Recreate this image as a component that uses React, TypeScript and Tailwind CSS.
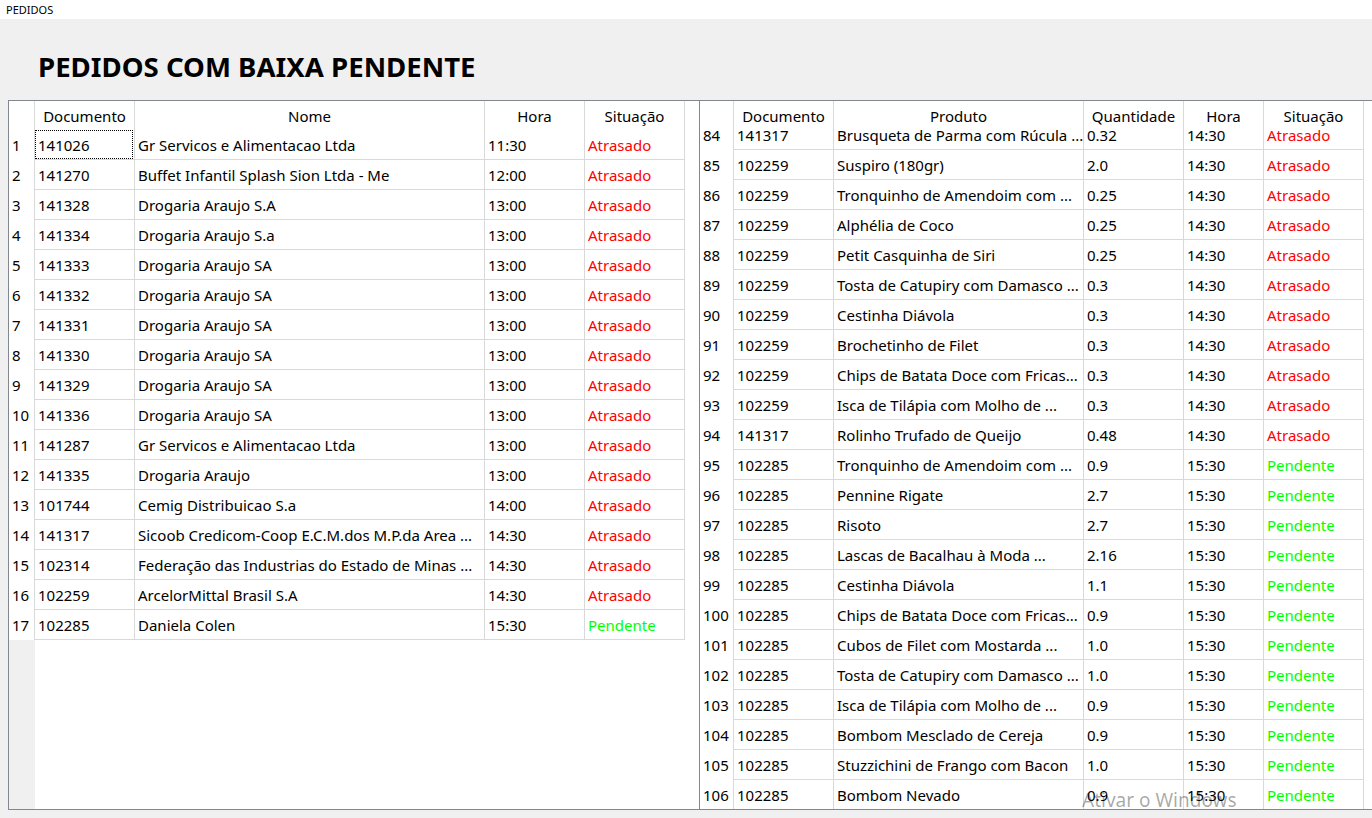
import React from "react";

type LRow = [number, string, string, string, string];
type RRow = [number, string, string, string, string, string];

const leftRows: LRow[] = [
  [1, "141026", "Gr Servicos e Alimentacao Ltda", "11:30", "Atrasado"],
  [2, "141270", "Buffet Infantil Splash Sion Ltda - Me", "12:00", "Atrasado"],
  [3, "141328", "Drogaria Araujo S.A", "13:00", "Atrasado"],
  [4, "141334", "Drogaria Araujo S.a", "13:00", "Atrasado"],
  [5, "141333", "Drogaria Araujo SA", "13:00", "Atrasado"],
  [6, "141332", "Drogaria Araujo SA", "13:00", "Atrasado"],
  [7, "141331", "Drogaria Araujo SA", "13:00", "Atrasado"],
  [8, "141330", "Drogaria Araujo SA", "13:00", "Atrasado"],
  [9, "141329", "Drogaria Araujo SA", "13:00", "Atrasado"],
  [10, "141336", "Drogaria Araujo SA", "13:00", "Atrasado"],
  [11, "141287", "Gr Servicos e Alimentacao Ltda", "13:00", "Atrasado"],
  [12, "141335", "Drogaria Araujo", "13:00", "Atrasado"],
  [13, "101744", "Cemig Distribuicao S.a", "14:00", "Atrasado"],
  [14, "141317", "Sicoob Credicom-Coop E.C.M.dos M.P.da Area ...", "14:30", "Atrasado"],
  [15, "102314", "Federação das Industrias do Estado de Minas ...", "14:30", "Atrasado"],
  [16, "102259", "ArcelorMittal Brasil S.A", "14:30", "Atrasado"],
  [17, "102285", "Daniela Colen", "15:30", "Pendente"],
];

const rightRows: RRow[] = [
  [84, "141317", "Brusqueta de Parma com Rúcula ...", "0.32", "14:30", "Atrasado"],
  [85, "102259", "Suspiro (180gr)", "2.0", "14:30", "Atrasado"],
  [86, "102259", "Tronquinho de Amendoim com ...", "0.25", "14:30", "Atrasado"],
  [87, "102259", "Alphélia de Coco", "0.25", "14:30", "Atrasado"],
  [88, "102259", "Petit Casquinha de Siri", "0.25", "14:30", "Atrasado"],
  [89, "102259", "Tosta de Catupiry com Damasco ...", "0.3", "14:30", "Atrasado"],
  [90, "102259", "Cestinha Diávola", "0.3", "14:30", "Atrasado"],
  [91, "102259", "Brochetinho de Filet", "0.3", "14:30", "Atrasado"],
  [92, "102259", "Chips de Batata Doce com Fricas...", "0.3", "14:30", "Atrasado"],
  [93, "102259", "Isca de Tilápia com Molho de ...", "0.3", "14:30", "Atrasado"],
  [94, "141317", "Rolinho Trufado de Queijo", "0.48", "14:30", "Atrasado"],
  [95, "102285", "Tronquinho de Amendoim com ...", "0.9", "15:30", "Pendente"],
  [96, "102285", "Pennine Rigate", "2.7", "15:30", "Pendente"],
  [97, "102285", "Risoto", "2.7", "15:30", "Pendente"],
  [98, "102285", "Lascas de Bacalhau à Moda ...", "2.16", "15:30", "Pendente"],
  [99, "102285", "Cestinha Diávola", "1.1", "15:30", "Pendente"],
  [100, "102285", "Chips de Batata Doce com Fricas...", "0.9", "15:30", "Pendente"],
  [101, "102285", "Cubos de Filet com Mostarda ...", "1.0", "15:30", "Pendente"],
  [102, "102285", "Tosta de Catupiry com Damasco ...", "1.0", "15:30", "Pendente"],
  [103, "102285", "Isca de Tilápia com Molho de ...", "0.9", "15:30", "Pendente"],
  [104, "102285", "Bombom Mesclado de Cereja", "0.9", "15:30", "Pendente"],
  [105, "102285", "Stuzzichini de Frango com Bacon", "1.0", "15:30", "Pendente"],
  [106, "102285", "Bombom Nevado", "0.9", "15:30", "Pendente"],
];

const statusClass = (s: string) =>
  s === "Pendente" ? "text-[#00ff00]" : "text-[#ff0000]";

const cell =
  "h-full shrink-0 border-r border-b border-[#d9d9d9] pl-[3px] pt-[1px] whitespace-nowrap overflow-hidden";
const hcell =
  "h-full shrink-0 border-r border-[#d9d9d9] text-center whitespace-nowrap";

export default function App() {
  return (
    <div
      className="relative w-[1372px] h-[818px] overflow-hidden bg-[#f0f0f0] text-black"
      style={{ fontFamily: '"Noto Sans", "Open Sans", sans-serif' }}
    >
      <div className="h-[19px] bg-white pl-[6px] text-[11px] leading-[19px]">
        PEDIDOS
      </div>
      <div className="h-[81px] pl-[38px] pt-[33px]">
        <h1 className="text-[27.6px] leading-[28px] font-bold">
          PEDIDOS COM BAIXA PENDENTE
        </h1>
      </div>

      <div className="flex h-[710px] ml-[8px] text-[15px]">
        {/* Left table */}
        <div className="w-[692px] shrink-0 border border-[#828790] bg-white flex flex-col overflow-hidden">
          <div className="flex h-[29px] shrink-0 leading-[30px]">
            <div className={`${hcell} w-[26px]`} />
            <div className={`${hcell} w-[100px]`}>Documento</div>
            <div className={`${hcell} w-[350px]`}>Nome</div>
            <div className={`${hcell} w-[100px]`}>Hora</div>
            <div className={`${hcell} w-[100px]`}>Situação</div>
          </div>
          {leftRows.map(([n, doc, nome, hora, sit]) => (
            <div key={n} className="flex h-[30px] shrink-0 leading-[29px]">
              <div className="h-full w-[26px] shrink-0 border-r border-[#d9d9d9] pl-[3px] pt-[1px] whitespace-nowrap">
                {n}
              </div>
              <div className={`${cell} w-[100px] relative`}>
                {doc}
                {n === 1 && (
                  <div className="absolute left-0 top-0 right-[1px] bottom-0 border border-dotted border-black" />
                )}
              </div>
              <div className={`${cell} w-[350px]`}>{nome}</div>
              <div className={`${cell} w-[100px]`}>{hora}</div>
              <div className={`${cell} w-[100px] ${statusClass(sit)}`}>{sit}</div>
            </div>
          ))}
          <div className="flex flex-1">
            <div className="w-[26px] bg-[#f0f0f0]" />
          </div>
        </div>

        {/* Right table */}
        <div className="flex-1 border-y border-[#828790] bg-white flex flex-col overflow-hidden">
          <div className="flex h-[19px] shrink-0 leading-[31px]">
            <div className={`${hcell} w-[34px]`} />
            <div className={`${hcell} w-[100px]`}>Documento</div>
            <div className={`${hcell} w-[250px]`}>Produto</div>
            <div className={`${hcell} w-[100px]`}>Quantidade</div>
            <div className={`${hcell} w-[80px]`}>Hora</div>
            <div className={`${hcell} w-[100px]`}>Situação</div>
          </div>
          {rightRows.map(([n, doc, prod, qtd, hora, sit]) => (
            <div key={n} className="flex h-[30px] shrink-0 leading-[29px]">
              <div className="h-full w-[34px] shrink-0 border-r border-[#d9d9d9] pl-[3px] pt-[1px] whitespace-nowrap">
                {n}
              </div>
              <div className={`${cell} w-[100px]`}>{doc}</div>
              <div className={`${cell} w-[250px]`}>{prod}</div>
              <div className={`${cell} w-[100px]`}>{qtd}</div>
              <div className={`${cell} w-[80px]`}>{hora}</div>
              <div className={`${cell} w-[100px] ${statusClass(sit)}`}>{sit}</div>
            </div>
          ))}
        </div>
      </div>

      {/* Windows activation watermark */}
      <div className="pointer-events-none absolute left-[1082px] top-[786px] whitespace-nowrap text-black/35">
        <div className="text-[19px] leading-[28px]">Ativar o Windows</div>
        <div className="text-[14px] leading-[20px]">
          Acesse Configurações para ativar o Windows.
        </div>
      </div>
    </div>
  );
}
